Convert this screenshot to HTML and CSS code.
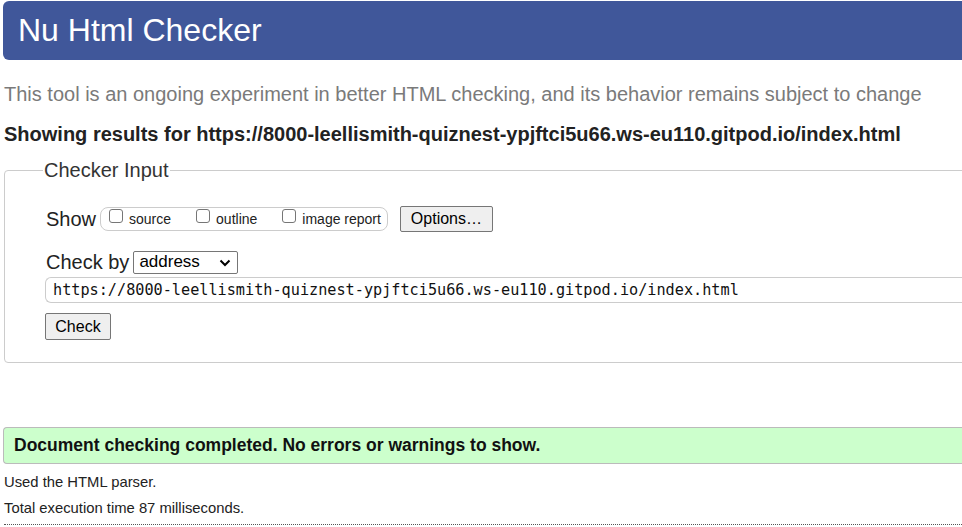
FILE: index.html
```html
<!DOCTYPE html>
<html lang="en">
<head>
<meta charset="utf-8">
<title>Nu Html Checker</title>
<link rel="stylesheet" href="styles.css">
</head>
<body>
<h1 class="banner">Nu Html Checker</h1>
<p class="intro">This tool is an ongoing experiment in better HTML checking, and its behavior remains subject to change</p>
<p class="showing">Showing results for https://8000-leellismith-quiznest-ypjftci5u66.ws-eu110.gitpod.io/index.html</p>
<fieldset class="checker">
  <legend class="legend">Checker Input</legend>
  <div class="row show-row">
    <span class="label">Show</span>
    <span class="pill">
      <label class="opt"><span class="box"></span>source</label>
      <label class="opt"><span class="box"></span>outline</label>
      <label class="opt"><span class="box"></span>image report</label>
    </span>
    <span class="btn options">Options…</span>
  </div>
  <div class="row by-row">
    <span class="label">Check by</span>
    <span class="select">address<svg class="chev" width="12" height="8" viewBox="0 0 12 8"><path d="M1.5 1.5 L6 6 L10.5 1.5" fill="none" stroke="#000" stroke-width="2"/></svg></span>
  </div>
  <div class="url">https://8000-leellismith-quiznest-ypjftci5u66.ws-eu110.gitpod.io/index.html</div>
  <div class="row check-row"><span class="btn check">Check</span></div>
</fieldset>
<div class="success">Document checking completed. No errors or warnings to show.</div>
<p class="stat first">Used the HTML parser.</p>
<p class="stat">Total execution time 87 milliseconds.</p>
<div class="dots"></div>
</body>
</html>
```
FILE: styles.css
```css
html, body { margin: 0; padding: 0; background: #fff; overflow: hidden; }
body {
  font-family: "Liberation Sans", Arial, sans-serif;
  color: #222;
  padding: 1px 0 0 4px;
  width: 1000px;
}
.banner {
  margin: 0 0 0 -1px;
  height: 59px;
  box-sizing: border-box;
  background: #40579a;
  color: #fff;
  font-weight: normal;
  font-size: 32px;
  line-height: 59px;
  padding-left: 15px;
  border-radius: 6px 0 0 6px;
}
.intro {
  margin: 22px 0 0 0;
  font-size: 20px;
  line-height: 24px;
  color: #7a7a7a;
}
.showing {
  margin: 16px 0 0 0;
  font-size: 20px;
  line-height: 24px;
  font-weight: bold;
  color: #222;
}
.checker {
  margin: 13px 0 0 0;
  border: 1px solid #ccc;
  border-radius: 4px 0 0 4px;
  padding: 10px 0 22px 41px;
  min-width: 0;
}
.legend {
  font-size: 20px;
  color: #333;
  padding: 0 1px;
  margin-left: -3px;
}
.row { display: flex; align-items: center; }
.label { font-size: 20px; color: #222; }
.show-row { margin-top: 14px; height: 26px; }
.pill {
  display: inline-flex;
  align-items: center;
  margin-left: 4px;
  height: 24px;
  box-sizing: border-box;
  border: 1px solid #ccc;
  border-radius: 8px;
  padding: 0 6px 0 8px;
  font-size: 14px;
  gap: 25px;
}
.opt { display: inline-flex; align-items: center; color: #222; }
.box {
  width: 12px; height: 12px;
  border: 1px solid #767676;
  border-radius: 3px;
  margin: -6px 6px 0 0;
  background: #fff;
}
.btn {
  display: inline-flex;
  align-items: center;
  justify-content: center;
  box-sizing: border-box;
  background: #efefef;
  border: 1px solid #767676;
  border-radius: 2px;
  font-size: 16px;
  color: #000;
}
.options { margin-left: 12px; width: 93px; height: 26px; }
.by-row { margin-top: 18px; height: 24px; }
.select {
  display: inline-flex;
  align-items: center;
  margin-left: 4px;
  width: 105px;
  height: 23px;
  box-sizing: border-box;
  border: 1px solid #767676;
  border-radius: 2px;
  padding: 0 0 0 5px;
  font-size: 17px;
  color: #000;
  position: relative;
}
.chev { position: absolute; right: 6px; top: 7px; }
.url {
  margin: 3px 0 0 -1px;
  height: 26px;
  box-sizing: border-box;
  border: 1px solid #ccc;
  border-right: none;
  border-radius: 6px 0 0 6px;
  font-family: "DejaVu Sans Mono", "Liberation Mono", monospace;
  font-size: 15.2px;
  line-height: 24px;
  padding-left: 7px;
  color: #111;
}
.check-row { margin-top: 10px; }
.check { width: 66px; height: 27px; margin-left: -1px; }
.success {
  margin: 64px 0 0 -1px;
  height: 37px;
  box-sizing: border-box;
  background: #ccffcc;
  border: 1px solid #bbb;
  border-right: none;
  border-radius: 4px 0 0 4px;
  font-weight: bold;
  font-size: 17.5px;
  line-height: 35px;
  padding-left: 10px;
  color: #111;
}
.stat { margin: 0; font-size: 14.8px; color: #222; line-height: 26px; }
.stat.first { margin-top: 5px; }
.dots { margin-top: 3px; border-top: 1px dotted #555; }
```
